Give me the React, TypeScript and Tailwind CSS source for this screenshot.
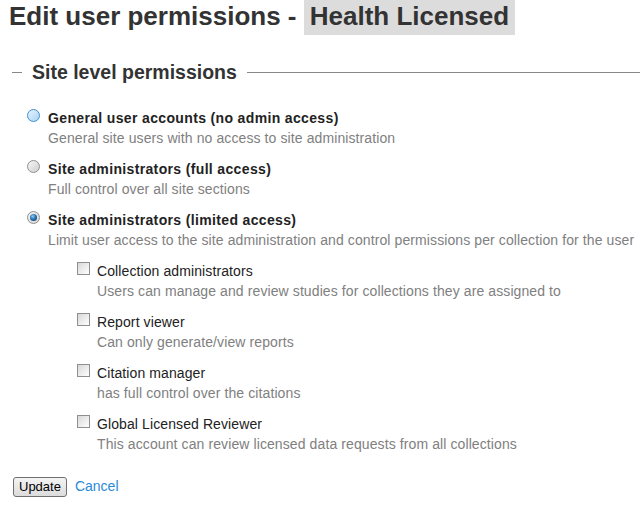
import React from 'react';

type RadioKind = 'hover' | 'plain' | 'checked';

const Radio: React.FC<{ kind: RadioKind }> = ({ kind }) => {
  if (kind === 'hover') {
    return (
      <span className="mt-[1px] block h-[13px] w-[13px] shrink-0 rounded-full border border-[#3c8fd0] bg-gradient-to-br from-[#e6f3fd] to-[#a9d4f5]" />
    );
  }
  if (kind === 'checked') {
    return (
      <span className="mt-[1px] flex h-[13px] w-[13px] shrink-0 items-center justify-center rounded-full border border-[#8e8f8f] bg-gradient-to-br from-[#f2f2f2] to-[#d6d6d6]">
        <span className="block h-[7px] w-[7px] rounded-full bg-[radial-gradient(circle_at_40%_35%,#8fd0f5_0%,#2a74b0_45%,#0f2f55_100%)]" />
      </span>
    );
  }
  return (
    <span className="mt-[1px] block h-[13px] w-[13px] shrink-0 rounded-full border border-[#8e8f8f] bg-gradient-to-br from-[#f6f6f6] to-[#cfcfcf]" />
  );
};

const Checkbox: React.FC = () => (
  <span className="mt-[1px] block h-[13px] w-[13px] shrink-0 border border-[#8e8f8f] bg-gradient-to-br from-[#d8d8d8] to-[#ffffff]" />
);

const siteLevels = [
  {
    kind: 'hover' as RadioKind,
    label: 'General user accounts (no admin access)',
    desc: 'General site users with no access to site administration',
  },
  {
    kind: 'plain' as RadioKind,
    label: 'Site administrators (full access)',
    desc: 'Full control over all site sections',
  },
  {
    kind: 'checked' as RadioKind,
    label: 'Site administrators (limited access)',
    desc: 'Limit user access to the site administration and control permissions per collection for the user',
  },
];

const collectionPerms = [
  { label: 'Collection administrators', desc: 'Users can manage and review studies for collections they are assigned to' },
  { label: 'Report viewer', desc: 'Can only generate/view reports' },
  { label: 'Citation manager', desc: 'has full control over the citations' },
  { label: 'Global Licensed Reviewer', desc: 'This account can review licensed data requests from all collections' },
];

export default function App() {
  return (
    <div className="h-[516px] w-[640px] overflow-hidden bg-white font-['Liberation_Sans',Arial,sans-serif] text-[#222]">
      {/* header */}
      <h1 className="flex h-[35px] items-start pl-[9px] text-[26px] font-bold leading-[32px] text-[#333]">
        <span>Edit user permissions -&nbsp;</span>
        <span className="h-[35px] bg-[#dcdcdc] px-[6px]">Health Licensed</span>
      </h1>

      <div className="pl-[12px]">
        {/* legend */}
        <div className="mt-[25px] flex items-center">
          <span className="h-px w-[10px] bg-[#888]" />
          <span className="px-[10px] text-[19.5px] font-bold leading-[24px] text-[#333]">Site level permissions</span>
          <span className="h-px flex-1 bg-[#888]" />
        </div>

        {/* site level radios */}
        <div className="mt-[24px] flex flex-col gap-[11px] pl-[15px]">
          {siteLevels.map((s) => (
            <div key={s.label} className="flex items-start gap-[8px]">
              <Radio kind={s.kind} />
              <div className="text-[14px] leading-[20px]">
                <div className="font-bold tracking-[0.35px] text-[#222]">{s.label}</div>
                <div className="whitespace-nowrap tracking-[0.1px] text-[#808080]">{s.desc}</div>
              </div>
            </div>
          ))}
        </div>

        {/* collection checkboxes */}
        <div className="mt-[11px] flex flex-col gap-[11px] pl-[65px]">
          {collectionPerms.map((c) => (
            <div key={c.label} className="flex items-start gap-[7px]">
              <Checkbox />
              <div className="text-[14px] leading-[20px]">
                <div className="tracking-[0.1px] text-[#222]">{c.label}</div>
                <div className="whitespace-nowrap tracking-[0.1px] text-[#808080]">{c.desc}</div>
              </div>
            </div>
          ))}
        </div>

        {/* actions */}
        <div className="mt-[22px] flex items-center gap-[8px]">
          <button className="ml-[1px] h-[20px] rounded-[3px] border border-[#707070] bg-gradient-to-b from-[#f4f4f4] to-[#dcdcdc] px-[5px] text-[13px] leading-[18px] text-black">
            Update
          </button>
          <a href="#" className="text-[14px] text-[#2a8ad4]">Cancel</a>
        </div>
      </div>
    </div>
  );
}
